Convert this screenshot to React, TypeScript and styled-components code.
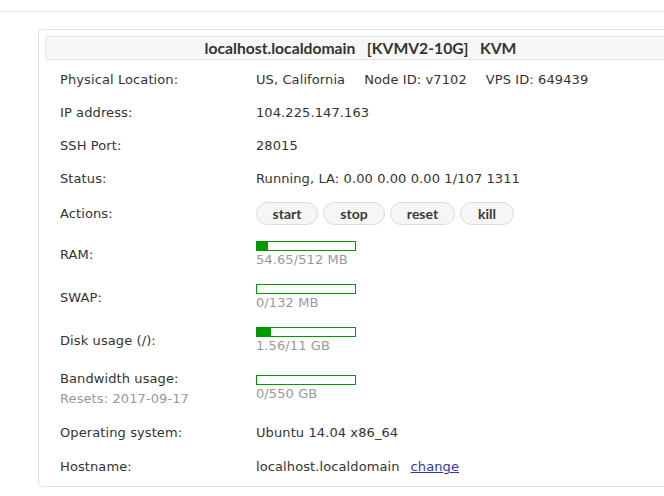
import React from "react";
import styled, { createGlobalStyle } from "styled-components";

const Global = createGlobalStyle`
  html, body { margin: 0; padding: 0; background: #fff; overflow: hidden; }
  body { font-family: "DejaVu Sans", Verdana, sans-serif; font-size: 13px; color: #333; letter-spacing: 0.1px; }
`;

const TopBar = styled.div`
  height: 11px;
  border-bottom: 1px solid #e6e6e6;
`;

const Page = styled.div`
  padding: 17px 0 0 38px;
`;

const Card = styled.div`
  width: 645px;
  box-sizing: border-box;
  border: 1px solid #e3e3e3;
  border-radius: 4px;
  padding: 6px 6px 3px;
`;

const Header = styled.div`
  height: 22px;
  line-height: 22px;
  background: #f7f7f7;
  border: 1px solid #e4e4e4;
  border-radius: 3px;
  text-align: center;
  font-family: Lato, "Open Sans", sans-serif;
  font-weight: 700;
  font-size: 15.7px;
  letter-spacing: 0;
  color: #333;
  white-space: pre;
`;

const Rows = styled.div`
  margin-top: 3px;
`;

const Row = styled.div<{ $top?: number; $bottom?: number }>`
  display: grid;
  grid-template-columns: 196px 1fr;
  align-items: center;
  padding: ${(p) => p.$top ?? 8}px 0 ${(p) => p.$bottom ?? 8}px 15px;
  line-height: 17px;
`;

const Label = styled.div``;

const SubLabel = styled.div`
  color: #999;
  margin-top: 3px;
`;

const Value = styled.div`
  display: flex;
  align-items: center;
`;

const Stack = styled.div`
  display: flex;
  flex-direction: column;
  align-items: flex-start;
`;

const Inline = styled.span<{ $gap?: number }>`
  margin-left: ${(p) => p.$gap ?? 0}px;
`;

const Buttons = styled.div`
  display: flex;
  gap: 5px;
`;

const Btn = styled.button<{ $w: number }>`
  width: ${(p) => p.$w}px;
  height: 23px;
  box-sizing: border-box;
  border: 1px solid #dcdcdc;
  border-radius: 12px;
  background: #f6f6f6;
  font-family: Lato, "Open Sans", sans-serif;
  font-weight: 700;
  font-size: 14px;
  color: #3a3a3a;
  padding: 0;
  cursor: pointer;
`;

const Bar = styled.div`
  width: 100px;
  height: 10px;
  box-sizing: border-box;
  border: 1px solid #009900;
  background: #fff;
`;

const Fill = styled.div`
  height: 100%;
  background: #009900;
`;

const Gray = styled.div`
  color: #999;
`;

const Link = styled.a`
  color: #3535a8;
  text-decoration: underline;
  margin-left: 11px;
`;

const Usage: React.FC<{ pct: number; text: string }> = ({ pct, text }) => (
  <Stack>
    <Bar>
      <Fill style={{ width: `${pct}%` }} />
    </Bar>
    <Gray>{text}</Gray>
  </Stack>
);

export default function App() {
  return (
    <>
      <Global />
      <TopBar />
      <Page>
        <Card>
          <Header>{"localhost.localdomain   [KVMV2-10G]   KVM"}</Header>
          <Rows>
            <Row>
              <Label>Physical Location:</Label>
              <Value>
                <span>US, California</span>
                <Inline $gap={19}>Node ID: v7102</Inline>
                <Inline $gap={19}>VPS ID: 649439</Inline>
              </Value>
            </Row>
            <Row>
              <Label>IP address:</Label>
              <Value>104.225.147.163</Value>
            </Row>
            <Row>
              <Label>SSH Port:</Label>
              <Value>28015</Value>
            </Row>
            <Row>
              <Label>Status:</Label>
              <Value>Running, LA: 0.00 0.00 0.00 1/107 1311</Value>
            </Row>
            <Row $top={7}>
              <Label>Actions:</Label>
              <Buttons>
                <Btn $w={62}>start</Btn>
                <Btn $w={62}>stop</Btn>
                <Btn $w={65}>reset</Btn>
                <Btn $w={54}>kill</Btn>
              </Buttons>
            </Row>
            <Row>
              <Label>RAM:</Label>
              <Usage pct={11} text="54.65/512 MB" />
            </Row>
            <Row>
              <Label>SWAP:</Label>
              <Usage pct={0} text="0/132 MB" />
            </Row>
            <Row>
              <Label>Disk usage (/):</Label>
              <Usage pct={14} text="1.56/11 GB" />
            </Row>
            <Row $bottom={9}>
              <Label>
                Bandwidth usage:
                <SubLabel>Resets: 2017-09-17</SubLabel>
              </Label>
              <Usage pct={0} text="0/550 GB" />
            </Row>
            <Row $bottom={9}>
              <Label>Operating system:</Label>
              <Value>Ubuntu 14.04 x86_64</Value>
            </Row>
            <Row>
              <Label>Hostname:</Label>
              <Value>
                <span>localhost.localdomain</span>
                <Link href="#">change</Link>
              </Value>
            </Row>
          </Rows>
        </Card>
      </Page>
    </>
  );
}
